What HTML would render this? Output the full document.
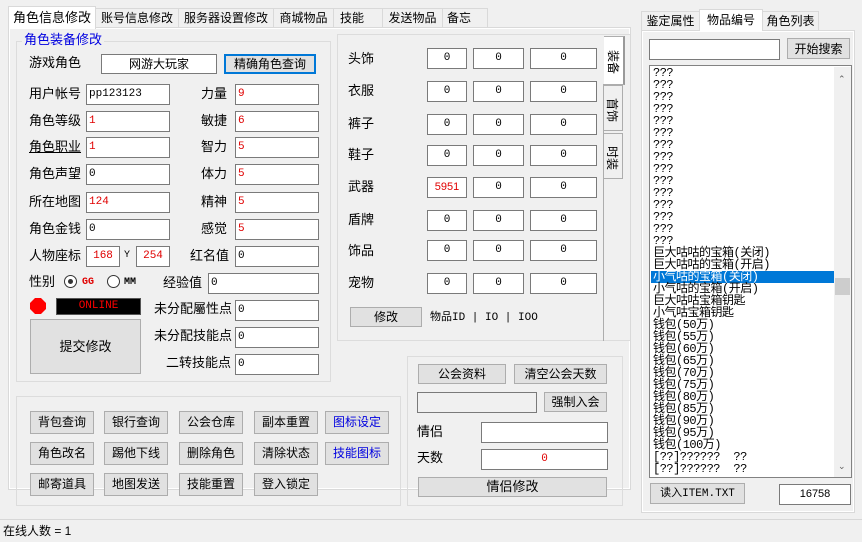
<!DOCTYPE html>
<html><head><meta charset="utf-8"><style>
*{box-sizing:border-box;margin:0;padding:0}
body{width:862px;height:542px;background:#f0f0f0;position:relative;overflow:hidden;font-family:"Liberation Sans","Noto Sans CJK SC",sans-serif;font-size:12px;color:#000}
.a{position:absolute}
.tab{position:absolute;border:1px solid #d9d9d9;border-bottom:none;background:#f0f0f0;font-size:12px;line-height:18px;text-align:center}
.tab.sel{background:#fff;border-color:#d9d9d9;z-index:2}
.in{position:absolute;background:#fff;border:1px solid #7a7a7a;font-family:"Liberation Mono","Noto Sans CJK SC",monospace;font-size:11px;line-height:18px;padding-left:2px;white-space:nowrap;overflow:hidden}
.r{color:#e00000}
.c{text-align:center;padding-left:0}
.btn{position:absolute;background:#e1e1e1;border:1px solid #adadad;text-align:center;font-size:12px;line-height:20px}
.lb{position:absolute;font-size:12px;line-height:14px;white-space:nowrap}
.grp{position:absolute;border:1px solid #dcdcdc}
.list div{height:12px;line-height:12px;font-size:12px;font-family:"Liberation Mono","Noto Sans CJK SC",monospace;padding-left:2px;white-space:nowrap;letter-spacing:-0.5px}
.vt{position:absolute;border:1px solid #adadad;border-left:none;background:#f0f0f0;writing-mode:vertical-rl;text-orientation:sideways;font-size:12px;text-align:center;line-height:20px;padding-top:4px}
</style></head><body>

<div class="a" style="left:8px;top:27px;width:623px;height:463px;background:#fff;border:1px solid #d9d9d9"></div>
<div class="a" style="left:10px;top:29px;width:619px;height:459px;background:#f0f0f0"></div>
<div class="tab sel" style="left:8px;top:6px;width:88px;height:23px;line-height:22px;font-size:13px">角色信息修改</div>
<div class="tab" style="left:95px;top:8px;width:84px;height:19px">账号信息修改</div>
<div class="tab" style="left:178px;top:8px;width:96px;height:19px">服务器设置修改</div>
<div class="tab" style="left:273px;top:8px;width:61px;height:19px">商城物品</div>
<div class="tab" style="left:333px;top:8px;width:50px;height:19px;text-align:left;padding-left:6px">技能</div>
<div class="tab" style="left:382px;top:8px;width:61px;height:19px">发送物品</div>
<div class="tab" style="left:442px;top:8px;width:46px;height:19px;text-align:left;padding-left:4px">备忘</div>

<div class="grp" style="left:16px;top:41px;width:315px;height:341px"></div>
<div class="lb" style="left:22px;top:33px;color:#0000e0;background:#f0f0f0;padding:0 2px;font-size:13px">角色装备修改</div>

<div class="lb" style="left:29px;top:56px;font-size:13px">游戏角色</div>
<div class="in c" style="left:101px;top:54px;width:116px;height:20px;font-family:'Noto Sans CJK SC',sans-serif;font-size:12px">网游大玩家</div>
<div class="btn" style="left:224px;top:54px;width:92px;height:20px;border:2px solid #0078d7;line-height:16px">精确角色查询</div>

<div class="lb" style="left:29px;top:87px;font-size:13px">用户帐号</div><div class="in" style="left:86px;top:84px;width:84px;height:21px">pp123123</div>
<div class="lb" style="left:29px;top:114px;font-size:13px">角色等级</div><div class="in r" style="left:86px;top:111px;width:84px;height:21px">1</div>
<div class="lb" style="left:29px;top:140px;font-size:13px;text-decoration:underline">角色职业</div><div class="in r" style="left:86px;top:137px;width:84px;height:21px">1</div>
<div class="lb" style="left:29px;top:167px;font-size:13px">角色声望</div><div class="in" style="left:86px;top:164px;width:84px;height:21px">0</div>
<div class="lb" style="left:29px;top:195px;font-size:13px">所在地图</div><div class="in r" style="left:86px;top:192px;width:84px;height:21px">124</div>
<div class="lb" style="left:29px;top:222px;font-size:13px">角色金钱</div><div class="in" style="left:86px;top:219px;width:84px;height:21px">0</div>
<div class="lb" style="left:29px;top:249px;font-size:13px">人物座标</div>
<div class="in r c" style="left:86px;top:246px;width:34px;height:21px">168</div>
<div class="lb" style="left:124px;top:249px;font-size:10px;font-family:'Liberation Mono',monospace">Y</div>
<div class="in r c" style="left:136px;top:246px;width:34px;height:21px">254</div>

<div class="lb" style="left:201px;top:87px;font-size:13px">力量</div><div class="in r" style="left:235px;top:84px;width:84px;height:21px">9</div>
<div class="lb" style="left:201px;top:114px;font-size:13px">敏捷</div><div class="in r" style="left:235px;top:111px;width:84px;height:21px">6</div>
<div class="lb" style="left:201px;top:140px;font-size:13px">智力</div><div class="in r" style="left:235px;top:137px;width:84px;height:21px">5</div>
<div class="lb" style="left:201px;top:167px;font-size:13px">体力</div><div class="in r" style="left:235px;top:164px;width:84px;height:21px">5</div>
<div class="lb" style="left:201px;top:195px;font-size:13px">精神</div><div class="in r" style="left:235px;top:192px;width:84px;height:21px">5</div>
<div class="lb" style="left:201px;top:222px;font-size:13px">感觉</div><div class="in r" style="left:235px;top:219px;width:84px;height:21px">5</div>
<div class="lb" style="left:190px;top:249px;font-size:13px">红名值</div><div class="in" style="left:235px;top:246px;width:84px;height:21px">0</div>

<div class="lb" style="left:29px;top:275px;font-size:13px">性别</div>
<div class="a" style="left:64px;top:275px;width:13px;height:13px;border:1px solid #333;border-radius:50%;background:#fff"></div>
<div class="a" style="left:68px;top:279px;width:5px;height:5px;border-radius:50%;background:#333"></div>
<div class="lb" style="left:82px;top:276px;font-size:10px;color:#e00000;font-family:'Liberation Mono',monospace;font-weight:bold">GG</div>
<div class="a" style="left:107px;top:275px;width:13px;height:13px;border:1px solid #333;border-radius:50%;background:#fff"></div>
<div class="lb" style="left:124px;top:276px;font-size:10px;font-family:'Liberation Mono',monospace;font-weight:bold">MM</div>
<div class="lb" style="left:163px;top:276px;font-size:13px">经验值</div><div class="in" style="left:208px;top:273px;width:111px;height:21px">0</div>

<svg class="a" style="left:30px;top:298px" width="17" height="17"><polygon points="5,0 11,0 16,5 16,11 11,16 5,16 0,11 0,5" fill="#f00"/></svg>
<div class="a" style="left:56px;top:298px;width:85px;height:17px;background:#000;border:1px solid #555;color:#f00;font-family:'Liberation Mono',monospace;font-size:11px;text-align:center;line-height:15px">ONLINE</div>
<div class="btn" style="left:30px;top:319px;width:111px;height:55px;line-height:53px;font-size:13px">提交修改</div>

<div class="lb" style="left:154px;top:302px;font-size:13px">未分配屬性点</div><div class="in" style="left:235px;top:300px;width:84px;height:21px">0</div>
<div class="lb" style="left:154px;top:329px;font-size:13px">未分配技能点</div><div class="in" style="left:235px;top:327px;width:84px;height:21px">0</div>
<div class="lb" style="left:166px;top:356px;font-size:13px">二转技能点</div><div class="in" style="left:235px;top:354px;width:84px;height:21px">0</div>

<div class="a" style="left:337px;top:34px;width:293px;height:307px;border:1px solid #dcdcdc;border-right:none;background:#f0f0f0"></div>
<div class="a" style="left:603px;top:84px;width:1px;height:257px;background:#adadad"></div>
<div class="vt" style="left:604px;top:36px;width:21px;height:49px;background:#fff;border-right:2px solid #999">装备</div>
<div class="vt" style="left:604px;top:85px;width:19px;height:46px">首饰</div>
<div class="vt" style="left:604px;top:133px;width:19px;height:46px">时装</div>

<div class="lb" style="left:348px;top:52px;font-size:13px">头饰</div>
<div class="lb" style="left:348px;top:84px;font-size:13px">衣服</div>
<div class="lb" style="left:348px;top:117px;font-size:13px">裤子</div>
<div class="lb" style="left:348px;top:148px;font-size:13px">鞋子</div>
<div class="lb" style="left:348px;top:180px;font-size:13px">武器</div>
<div class="lb" style="left:348px;top:213px;font-size:13px">盾牌</div>
<div class="lb" style="left:348px;top:244px;font-size:13px">饰品</div>
<div class="lb" style="left:348px;top:276px;font-size:13px">宠物</div>

<div class="in c" style="left:427px;top:48px;width:40px;height:21px">0</div><div class="in c" style="left:473px;top:48px;width:51px;height:21px">0</div><div class="in c" style="left:530px;top:48px;width:67px;height:21px">0</div>
<div class="in c" style="left:427px;top:81px;width:40px;height:21px">0</div><div class="in c" style="left:473px;top:81px;width:51px;height:21px">0</div><div class="in c" style="left:530px;top:81px;width:67px;height:21px">0</div>
<div class="in c" style="left:427px;top:114px;width:40px;height:21px">0</div><div class="in c" style="left:473px;top:114px;width:51px;height:21px">0</div><div class="in c" style="left:530px;top:114px;width:67px;height:21px">0</div>
<div class="in c" style="left:427px;top:145px;width:40px;height:21px">0</div><div class="in c" style="left:473px;top:145px;width:51px;height:21px">0</div><div class="in c" style="left:530px;top:145px;width:67px;height:21px">0</div>
<div class="in c r" style="left:427px;top:177px;width:40px;height:21px;font-family:'Liberation Sans',sans-serif">5951</div><div class="in c" style="left:473px;top:177px;width:51px;height:21px">0</div><div class="in c" style="left:530px;top:177px;width:67px;height:21px">0</div>
<div class="in c" style="left:427px;top:210px;width:40px;height:21px">0</div><div class="in c" style="left:473px;top:210px;width:51px;height:21px">0</div><div class="in c" style="left:530px;top:210px;width:67px;height:21px">0</div>
<div class="in c" style="left:427px;top:240px;width:40px;height:21px">0</div><div class="in c" style="left:473px;top:240px;width:51px;height:21px">0</div><div class="in c" style="left:530px;top:240px;width:67px;height:21px">0</div>
<div class="in c" style="left:427px;top:273px;width:40px;height:21px">0</div><div class="in c" style="left:473px;top:273px;width:51px;height:21px">0</div><div class="in c" style="left:530px;top:273px;width:67px;height:21px">0</div>

<div class="btn" style="left:350px;top:307px;width:72px;height:20px;line-height:18px">修改</div>
<div class="lb" style="left:430px;top:311px;font-size:11px;font-family:'Liberation Mono','Noto Sans CJK SC',monospace">物品ID | IO | IOO</div>

<div class="grp" style="left:16px;top:396px;width:385px;height:110px"></div>
<div class="btn" style="left:30px;top:411px;width:64px;height:23px">背包查询</div>
<div class="btn" style="left:104px;top:411px;width:64px;height:23px">银行查询</div>
<div class="btn" style="left:179px;top:411px;width:64px;height:23px">公会仓库</div>
<div class="btn" style="left:254px;top:411px;width:64px;height:23px">副本重置</div>
<div class="btn" style="left:325px;top:411px;width:64px;height:23px;color:#0000e0">图标设定</div>
<div class="btn" style="left:30px;top:442px;width:64px;height:23px">角色改名</div>
<div class="btn" style="left:104px;top:442px;width:64px;height:23px">踢他下线</div>
<div class="btn" style="left:179px;top:442px;width:64px;height:23px">删除角色</div>
<div class="btn" style="left:254px;top:442px;width:64px;height:23px">清除状态</div>
<div class="btn" style="left:325px;top:442px;width:64px;height:23px;color:#0000e0">技能图标</div>
<div class="btn" style="left:30px;top:473px;width:64px;height:23px">邮寄道具</div>
<div class="btn" style="left:104px;top:473px;width:64px;height:23px">地图发送</div>
<div class="btn" style="left:179px;top:473px;width:64px;height:23px">技能重置</div>
<div class="btn" style="left:254px;top:473px;width:64px;height:23px">登入锁定</div>

<div class="grp" style="left:407px;top:356px;width:216px;height:150px"></div>
<div class="btn" style="left:418px;top:364px;width:88px;height:20px;line-height:18px">公会资料</div>
<div class="btn" style="left:514px;top:364px;width:93px;height:20px;line-height:18px">清空公会天数</div>
<div class="a" style="left:417px;top:392px;width:120px;height:21px;border:1px solid #7a7a7a;background:#f0f0f0"></div>
<div class="btn" style="left:544px;top:392px;width:63px;height:20px;line-height:18px">强制入会</div>
<div class="lb" style="left:417px;top:425px;font-size:13px">情侣</div>
<div class="in" style="left:481px;top:422px;width:127px;height:21px"></div>
<div class="lb" style="left:417px;top:451px;font-size:13px">天数</div>
<div class="in c r" style="left:481px;top:449px;width:127px;height:21px">0</div>
<div class="btn" style="left:418px;top:477px;width:189px;height:20px;line-height:18px;font-size:13px">情侣修改</div>

<div class="a" style="left:641px;top:30px;width:214px;height:483px;background:#fff;border:1px solid #d9d9d9"></div>
<div class="a" style="left:643px;top:32px;width:210px;height:479px;background:#f0f0f0"></div>
<div class="tab" style="left:641px;top:11px;width:59px;height:19px">鉴定属性</div>
<div class="tab sel" style="left:699px;top:9px;width:64px;height:22px;line-height:20px">物品编号</div>
<div class="tab" style="left:762px;top:11px;width:57px;height:19px">角色列表</div>

<div class="a" style="left:649px;top:39px;width:131px;height:21px;background:#fff;border:1px solid #7a7a7a"></div>
<div class="btn" style="left:787px;top:38px;width:63px;height:21px">开始搜索</div>

<div class="a" style="left:649px;top:65px;width:203px;height:413px;background:#fff;border:1px solid #828282;overflow:hidden">
 <div class="a list" style="left:1px;top:1px;width:183px;height:410px;overflow:hidden">
  <div>???</div><div>???</div><div>???</div><div>???</div><div>???</div><div>???</div><div>???</div><div>???</div><div>???</div><div>???</div><div>???</div><div>???</div><div>???</div><div>???</div><div>???</div>
  <div>巨大咕咕的宝箱(关闭)</div><div>巨大咕咕的宝箱(开启)</div>
  <div style="background:#0078d7;color:#fff">小气咕的宝箱(关闭)</div>
  <div>小气咕的宝箱(开启)</div><div>巨大咕咕宝箱钥匙</div><div>小气咕宝箱钥匙</div>
  <div>钱包(50万)</div><div>钱包(55万)</div><div>钱包(60万)</div><div>钱包(65万)</div><div>钱包(70万)</div><div>钱包(75万)</div><div>钱包(80万)</div><div>钱包(85万)</div><div>钱包(90万)</div><div>钱包(95万)</div><div>钱包(100万)</div>
  <div>[??]??????&nbsp;&nbsp;??</div><div>[??]??????&nbsp;&nbsp;??</div>
 </div>
 <div class="a" style="left:184px;top:1px;width:17px;height:410px;background:#f0f0f0"></div>
 <div class="a" style="left:188px;top:8px;font-size:9px;color:#606060">&#8963;</div>
 <div class="a" style="left:185px;top:212px;width:15px;height:17px;background:#cdcdcd"></div>
 <div class="a" style="left:188px;top:395px;font-size:9px;color:#606060">&#8964;</div>
</div>

<div class="btn" style="left:650px;top:483px;width:95px;height:21px;font-family:'Liberation Mono','Noto Sans CJK SC',monospace;font-size:11px">读入ITEM.TXT</div>
<div class="in c" style="left:779px;top:484px;width:72px;height:21px;font-family:'Liberation Sans',sans-serif">16758</div>

<div class="a" style="left:0;top:519px;width:862px;height:1px;background:#d7d7d7"></div>
<div class="lb" style="left:3px;top:524px;font-size:12px">在线人数 = 1</div>
</body></html>
